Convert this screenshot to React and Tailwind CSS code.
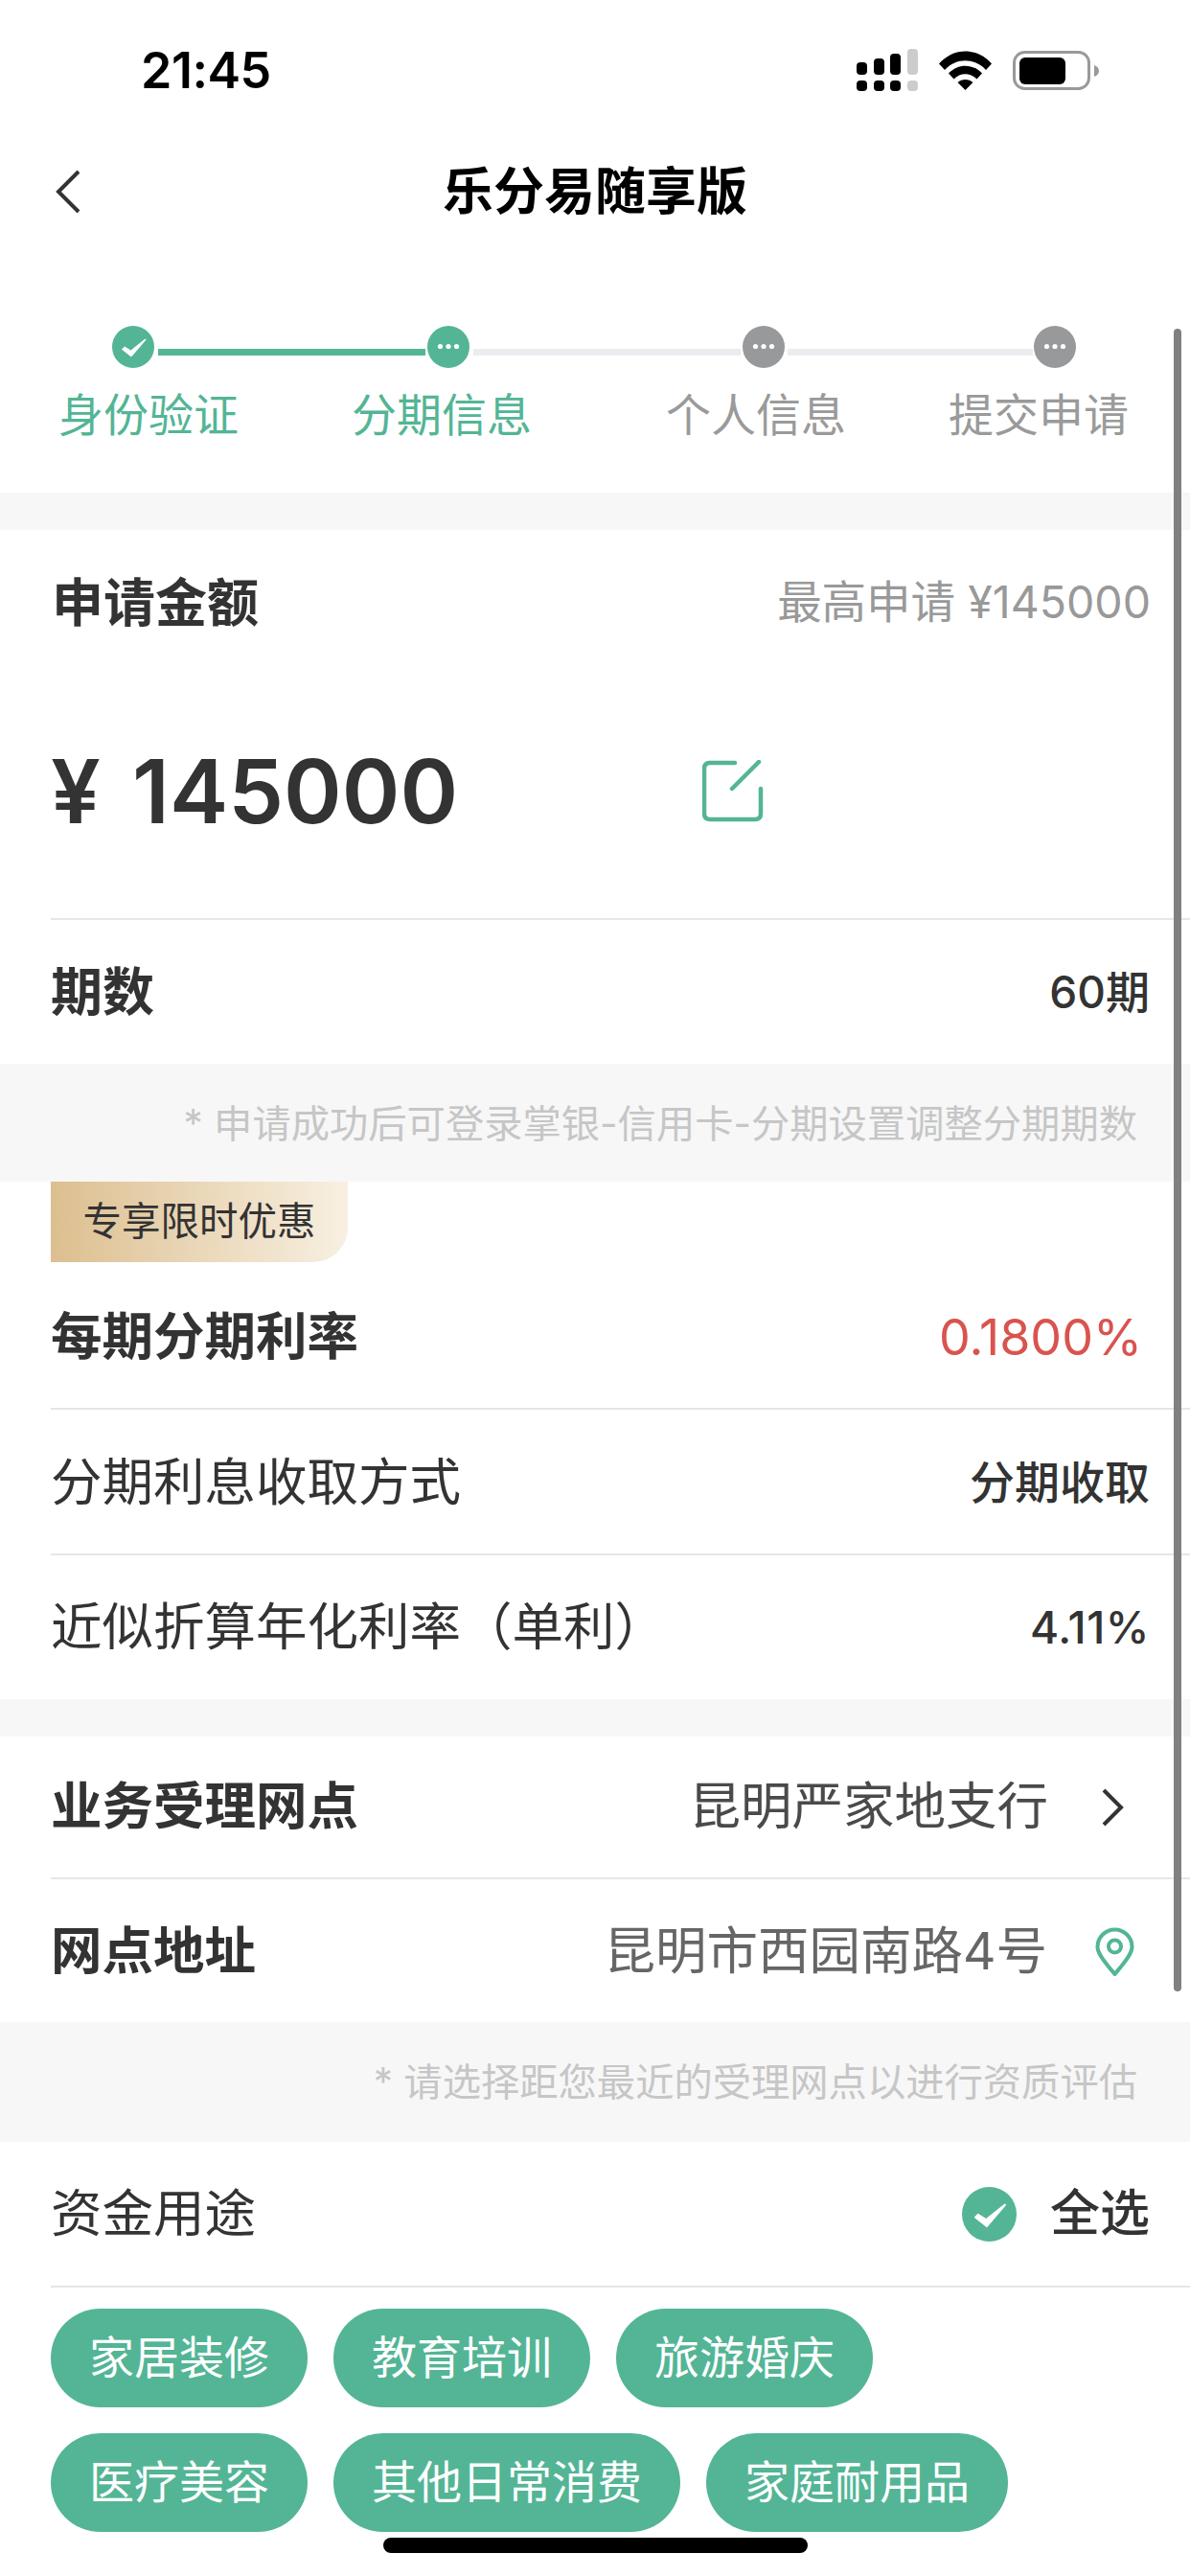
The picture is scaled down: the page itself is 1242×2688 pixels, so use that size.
import React from 'react';

const purposeRows = [
    ['家居装修', '教育培训', '旅游婚庆'],
    ['医疗美容', '其他日常消费', '家庭耐用品'],
];

const CheckCircle = ({ size }) => (
    <svg width={size} height={size} viewBox="0 0 44 44" className="shrink-0">
        <circle cx="22" cy="22" r="22" fill="#53b595" />
        <path d="M10.500 24.500L13 22l6.500 4L34.500 14l.5.500L20 32z" fill="#fff" stroke="#fff" strokeWidth="1" strokeLinejoin="round" />
    </svg>
);

const DotsCircle = ({ color }) => (
    <svg width="44" height="44" viewBox="0 0 44 44" className="shrink-0">
        <circle cx="22" cy="22" r="22" fill={color} />
        <circle cx="13.500" cy="21.500" r="2.600" fill="#fff" />
        <circle cx="22" cy="21.500" r="2.600" fill="#fff" />
        <circle cx="30.500" cy="21.500" r="2.600" fill="#fff" />
    </svg>
);

const StatusIcons = () => (
    <div className="flex items-center">
        {/* signal */}
        <svg width="64" height="44" viewBox="0 0 64 44">
            <rect x="0" y="14" width="11" height="13" rx="4" fill="#000" />
            <rect x="18" y="10" width="11" height="17" rx="4" fill="#000" />
            <rect x="35" y="5" width="11" height="22" rx="4" fill="#000" />
            <rect x="53" y="0" width="11" height="27" rx="4" fill="#ccc" />
            <rect x="0" y="33" width="11" height="11" rx="4" fill="#000" />
            <rect x="18" y="33" width="11" height="11" rx="4" fill="#000" />
            <rect x="35" y="33" width="11" height="11" rx="4" fill="#000" />
            <rect x="53" y="33" width="11" height="11" rx="4" fill="#ccc" />
        </svg>
        {/* wifi */}
        <svg width="55" height="41" viewBox="0 0 55 41" className="ml-[22px]">
            <path d="M0 13.500C15-4 40-4 55 13.500l-6 6.500C37 7 18 7 6 20z" fill="#000" />
            <path d="M10 23.500c10-10.500 25-10.500 35 0l-5.500 6c-7-7-17-7-24 0z" fill="#000" />
            <path d="M19.500 33c4.500-4 11.500-4 16 0l-8 8z" fill="#000" />
        </svg>
        {/* battery */}
        <svg width="90" height="41" viewBox="0 0 90 41" className="ml-[22px]">
            <rect x="1.500" y="1.500" width="78" height="38" rx="11" fill="none" stroke="#999" strokeWidth="3" />
            <rect x="7" y="7" width="48" height="28" rx="6" fill="#000" />
            <path d="M85 15c3 1 5 3 5 6s-2 5-5 6z" fill="#999" />
        </svg>
    </div>
);

const Row = ({ height, divider = true, className = '', children }) => (
    <div className={`ml-[53px] flex items-center justify-between pr-[42px] ${divider ? 'border-b-2 border-[#e6e6e6]' : ''} ${className}`} style={{ height }}>
        {children}
    </div>
);

const App = () => {
    return (
        <div className="relative h-[2688px] w-[1242px] overflow-hidden bg-white text-[#333] font-['Inter','Noto_Sans_CJK_SC',sans-serif]">
            {/* Status bar */}
            <div className="flex h-[150px] items-start justify-between pl-[147px] pr-[95px] pt-[51px]">
                <span className="text-[52px] font-semibold leading-[46px] tracking-[-0.5px] text-black">21:45</span>
                <StatusIcons />
            </div>

            {/* Nav */}
            <div className="relative flex h-[100px] items-center justify-center">
                <svg width="26" height="46" viewBox="0 0 26 46" className="absolute left-[58px] top-[27px]">
                    <path d="M24 2L3 23l21 21" fill="none" stroke="#333" strokeWidth="4" />
                </svg>
                <h1 className="text-[53px] font-bold leading-none text-black">乐分易随享版</h1>
            </div>

            {/* Steps */}
            <div className="h-[264px] pt-[90px]">
                <div className="flex h-[44px] items-start pl-[117px]">
                    <CheckCircle size={44} />
                    <div className="ml-[4px] mt-[24px] h-[7px] w-[279px] bg-[#53b595]"></div>
                    <div className="ml-[2px]"><DotsCircle color="#53b595" /></div>
                    <div className="ml-[4px] mt-[24px] h-[7px] w-[279px] bg-[#ececf0]"></div>
                    <div className="ml-[2px]"><DotsCircle color="#98999b" /></div>
                    <div className="ml-[3px] mt-[24px] h-[7px] w-[256px] bg-[#ececf0]"></div>
                    <div className="ml-[1px]"><DotsCircle color="#98999b" /></div>
                </div>
                <div className="mt-[22px] flex text-[47px] leading-[54px]">
                    <span className="ml-[61px] w-[306px] text-[#53b595]">身份验证</span>
                    <span className="w-[328px] text-[#53b595]">分期信息</span>
                    <span className="w-[295px] text-[#9a9a9a]">个人信息</span>
                    <span className="text-[#9a9a9a]">提交申请</span>
                </div>
            </div>

            <div className="h-[39px] bg-[#f7f7f7]"></div>

            {/* Amount */}
            <div className="flex h-[152px] items-center justify-between pl-[54px] pr-[41px]">
                <span className="text-[54px] font-bold">申请金额</span>
                <span className="text-[46.500px] text-[#999]">最高申请 ¥145000</span>
            </div>
            <Row height={255} className="!justify-start pb-[12px]">
                <span className="w-[85px] text-[92px] font-semibold leading-none">¥</span>
                <span className="w-[595px] text-[92px] font-semibold leading-none">145000</span>
                <svg width="64" height="66" viewBox="0 0 64 66">
                    <path d="M34 3H8Q2 3 2 9V56Q2 62 8 62H55Q61 62 61 56V30" fill="none" stroke="#53b595" strokeWidth="4.500" strokeLinecap="round" />
                    <path d="M31 30L59 2" fill="none" stroke="#53b595" strokeWidth="4.500" strokeLinecap="round" />
                </svg>
            </Row>
            <Row height={150} divider={false}>
                <span className="text-[54px] font-bold">期数</span>
                <span className="text-[46px] font-medium">60期</span>
            </Row>

            <div className="flex h-[123px] items-center justify-end bg-[#f7f7f7] pr-[55px] pt-[3px] text-[40.300px] text-[#c6c6c6]">
                * 申请成功后可登录掌银-信用卡-分期设置调整分期期数
            </div>

            {/* Rate */}
            <div className="ml-[53px] flex h-[84px] w-[310px] items-center justify-center rounded-br-[36px] bg-gradient-to-r from-[#dcbf8f] to-[#f8f0e2] text-[40.500px]">
                专享限时优惠
            </div>
            <Row height={154} className="pt-[5px]">
                <span className="text-[53.500px] font-bold">每期分期利率</span>
                <span className="mr-[8px] text-[52px] text-[#d9534f]">0.1800%</span>
            </Row>
            <Row height={152} className="pt-[3px]">
                <span className="text-[53.500px]">分期利息收取方式</span>
                <span className="text-[47px] font-medium">分期收取</span>
            </Row>
            <Row height={150} divider={false}>
                <span className="text-[53.500px]">近似折算年化利率（单利）</span>
                <span className="text-[46px] font-medium tracking-[0.5px]">4.11%</span>
            </Row>

            <div className="h-[39px] bg-[#f7f7f7]"></div>

            {/* Branch */}
            <Row height={149} className="!pr-[68px]">
                <span className="text-[53.500px] font-bold">业务受理网点</span>
                <div className="flex items-center">
                    <span className="text-[53.500px] text-[#4a4a4a]">昆明严家地支行</span>
                    <svg width="24" height="40" viewBox="0 0 24 40" className="ml-[56px]">
                        <path d="M2 2l18 18L2 38" fill="none" stroke="#333" strokeWidth="4" />
                    </svg>
                </div>
            </Row>
            <Row height={149} divider={false} className="!pr-[58px] pt-[2px]">
                <span className="text-[53.500px] font-bold">网点地址</span>
                <div className="flex items-center">
                    <span className="text-[53.500px] text-[#666]">昆明市西园南路4号</span>
                    <svg width="41" height="52" viewBox="0 0 41 52" className="ml-[50px]">
                        <path d="M20.500 49C14 41 2.500 29 2.500 20.500a18 18 0 0 1 36 0C38.500 29 27 41 20.500 49z" fill="none" stroke="#53b595" strokeWidth="4" strokeLinejoin="round" />
                        <circle cx="20.500" cy="20" r="6.500" fill="none" stroke="#53b595" strokeWidth="4" />
                    </svg>
                </div>
            </Row>

            <div className="flex h-[125px] items-center justify-end bg-[#f7f7f7] pr-[55px] pt-[2px] text-[40.300px] text-[#c6c6c6]">
                * 请选择距您最近的受理网点以进行资质评估
            </div>

            {/* Purpose */}
            <Row height={152}>
                <span className="text-[53.500px]">资金用途</span>
                <div className="flex items-center">
                    <CheckCircle size={57} />
                    <span className="ml-[35px] text-[52px] font-medium">全选</span>
                </div>
            </Row>
            <div className="ml-[53px] mt-[22px] flex flex-col gap-[27px]">
                {purposeRows.map((row) => (
                    <div key={row[0]} className="flex gap-[27px]">
                        {row.map((item) => (
                            <div key={item} className="flex h-[103px] items-center rounded-full bg-[#53b595] px-[40px] text-[47px] text-white">
                                {item}
                            </div>
                        ))}
                    </div>
                ))}
            </div>

            {/* Scrollbar and home indicator */}
            <div className="absolute left-[1225px] top-[343px] h-[1735px] w-[8px] rounded-full bg-[#808080]"></div>
            <div className="absolute bottom-[24px] left-[400px] h-[16px] w-[443px] rounded-full bg-black"></div>
        </div>
    );
};

export default App;
